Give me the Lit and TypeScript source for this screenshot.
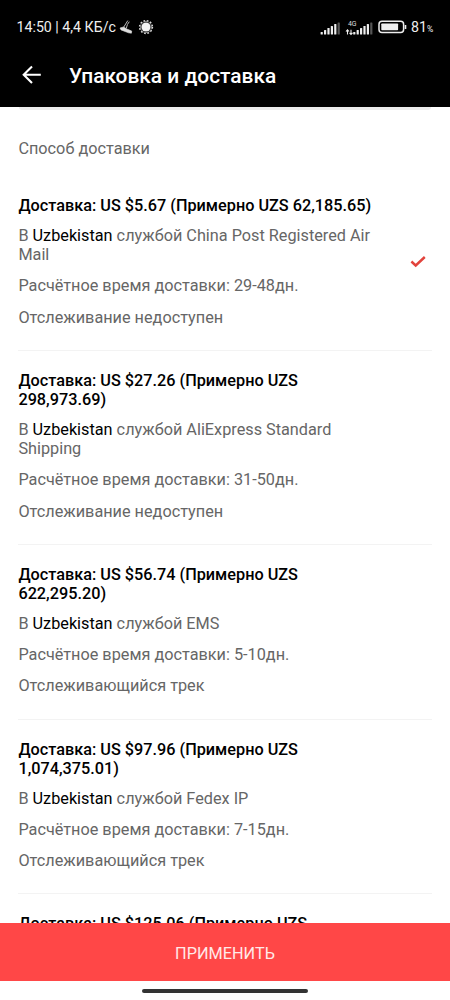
import { LitElement, html, svg, css, nothing } from "lit";
import { customElement, property } from "lit/decorators.js";

interface Option {
  price: string;
  local: string;
  service: string;
  days: string;
  tracking: string;
  selected?: boolean;
}

const OPTIONS: Option[] = [
  { price: "5.67", local: "62,185.65", service: "China Post Registered Air Mail", days: "29-48", tracking: "Отслеживание недоступен", selected: true },
  { price: "27.26", local: "298,973.69", service: "AliExpress Standard Shipping", days: "31-50", tracking: "Отслеживание недоступен" },
  { price: "56.74", local: "622,295.20", service: "EMS", days: "5-10", tracking: "Отслеживающийся трек" },
  { price: "97.96", local: "1,074,375.01", service: "Fedex IP", days: "7-15", tracking: "Отслеживающийся трек" },
  { price: "125.06", local: "1,371,595.55", service: "DHL", days: "7-15", tracking: "Отслеживающийся трек" },
];

@customElement("status-bar")
class StatusBar extends LitElement {
  static styles = css`
    :host { display: flex; align-items: center; height: 20px; padding: 17px 16.5px 0 16.5px; color: #eee; font-size: 14.2px; line-height: 20px; white-space: pre; }
    .time { width: 99.5px; }
    .shoe { margin-left: 3px; }
    .sun { margin-left: 5px; }
    .space { flex: 1; }
    .signal { display: block; }
    .battery { margin-left: 5px; }
    .level { margin-left: 4px; width: 16px; font-size: 14.2px; }
    .pct { font-size: 8.5px; margin-top: 4px; width: 6.5px; }
    .net { font: 7px Roboto, sans-serif; }
  `;

  private bars(x: number) {
    return [2.5, 4.5, 6.5, 8.5, 10.5, 12].map(
      (h, i) => svg`<rect x=${x + i * 3.4} y=${15.5 - h} width="2.2" height=${h} rx=".5" fill=${i === 5 ? "#555" : "#eee"}/>`,
    );
  }

  render() {
    return html`
      <span class="time">14:50 | 4,4 КБ/с</span>
      <svg class="shoe" width="14" height="16" viewBox="0 0 14 16">
        <path d="M1 9 L4.5 8 L8.5 10.3 L12.7 12 L12.4 14.2 L9.5 13.8 L2 10.9Z" fill="#ddd" stroke="#ddd" stroke-width=".6"/>
        <path d="M4.8 8 L8.8 1.6 M7.4 9 Q8 5 10.3 2.7" fill="none" stroke="#bbb" stroke-width="1"/>
      </svg>
      <svg class="sun" width="16" height="16" viewBox="0 0 16 16">
        <circle cx="8" cy="8" r="6.4" fill="none" stroke="#ddd" stroke-width="1.5" stroke-dasharray="1.7 1.65"/>
        <circle cx="8" cy="8" r="5.6" fill="none" stroke="#aaa" stroke-width=".7"/>
        <circle cx="8" cy="8" r="4.6" fill="#f4f4f4"/>
      </svg>
      <span class="space"></span>
      <svg class="signal" width="53" height="17" viewBox="0 0 53 17">
        ${this.bars(0.6)} ${this.bars(33.2)}
        <text class="net" x="28" y="7" fill="#ddd" textLength="8.5">4G</text>
        <path d="M27.5 15.5V11M26 12.5l1.5-1.7 1.5 1.7M31 10.8v4.5M29.5 13.8l1.5 1.7 1.5-1.7" fill="none" stroke="#eee" stroke-width="1.1"/>
      </svg>
      <svg class="battery" width="29" height="14" viewBox="0 0 29 14">
        <rect x="1" y="1.2" width="24.6" height="11.4" rx="3" fill="none" stroke="#eee" stroke-width="1.5"/>
        <rect x="3.3" y="3.5" width="16.8" height="6.8" rx=".7" fill="#eee"/>
        <path d="M27.5 5v4" stroke="#eee" stroke-width="1.6"/>
      </svg>
      <span class="level">81</span><span class="pct">%</span>
    `;
  }
}

@customElement("shipping-option")
class ShippingOption extends LitElement {
  @property({ attribute: false }) option!: Option;

  static styles = css`
    :host { display: flex; align-items: center; box-sizing: border-box; padding: 20px 0 23px; border-bottom: 1px solid #f3f3f3; color: #666; font-size: 16.25px; line-height: 19.2px; }
    .info { width: 360px; }
    .title { width: 355px; color: #000; font-weight: 500; margin-bottom: 10.8px; }
    .line { margin-bottom: 12px; }
    .track { margin-bottom: 0; }
    .country { color: #000; }
    .check { margin-left: 30.5px; }
  `;

  render() {
    const o = this.option;
    return html`
      <div class="info">
        <div class="title">Доставка: US $${o.price} (Примерно UZS ${o.local})</div>
        <div class="line">В <span class="country">Uzbekistan</span> службой ${o.service}</div>
        <div class="line">Расчётное время доставки: ${o.days}дн.</div>
        <div class="line track">${o.tracking}</div>
      </div>
      ${o.selected
        ? html`<svg class="check" width="18" height="14" viewBox="0 0 18 14">
            <path d="M2.4 7.5 L6.7 11.5 L15.8 3" fill="none" stroke="#e2433c" stroke-width="2.4"/>
          </svg>`
        : nothing}
    `;
  }
}

@customElement("app-root")
class AppRoot extends LitElement {
  static styles = css`
    :host { display: flex; flex-direction: column; height: 1000px; overflow: hidden; background: #fff; font-family: Roboto, "Noto Sans", sans-serif; }
    .top { flex: none; height: 107px; background: #000; color: #fff; }
    .bar { display: flex; align-items: center; height: 30px; margin-top: 23px; padding-left: 21px; }
    .title { margin-left: 27px; padding-top: 1px; font-size: 20.9px; font-weight: 500; line-height: 30px; white-space: nowrap; }
    .list { flex: 1; min-height: 0; overflow: hidden; padding: 0 18.4px; }
    .edge { height: 3px; margin: 0 1px; background: #ececec; border-radius: 0 0 6px 6px; }
    .heading { margin-top: 28.5px; margin-bottom: 18.1px; color: #666; font-size: 16.25px; line-height: 19.3px; }
    .apply { flex: none; display: flex; align-items: center; justify-content: center; box-sizing: border-box; height: 58px; padding-top: 2px; background: #ff4747; color: #ffe9e9; font-size: 16.25px; }
    .nav { flex: none; height: 19px; display: flex; justify-content: center; }
    .pill { width: 166px; height: 4px; margin-top: 8px; border-radius: 2px; background: #333; }
  `;

  render() {
    return html`
      <div class="top">
        <status-bar></status-bar>
        <div class="bar">
          <svg width="21" height="20" viewBox="0 0 21 20">
            <path d="M19.8 9.7H3M11 1.5L2.7 9.7L11 17.9" fill="none" stroke="#fff" stroke-width="2.1"/>
          </svg>
          <span class="title">Упаковка и доставка</span>
        </div>
      </div>
      <div class="list">
        <div class="edge"></div>
        <div class="heading">Способ доставки</div>
        ${OPTIONS.map((o) => html`<shipping-option .option=${o}></shipping-option>`)}
      </div>
      <div class="apply">ПРИМЕНИТЬ</div>
      <div class="nav"><div class="pill"></div></div>
    `;
  }
}
